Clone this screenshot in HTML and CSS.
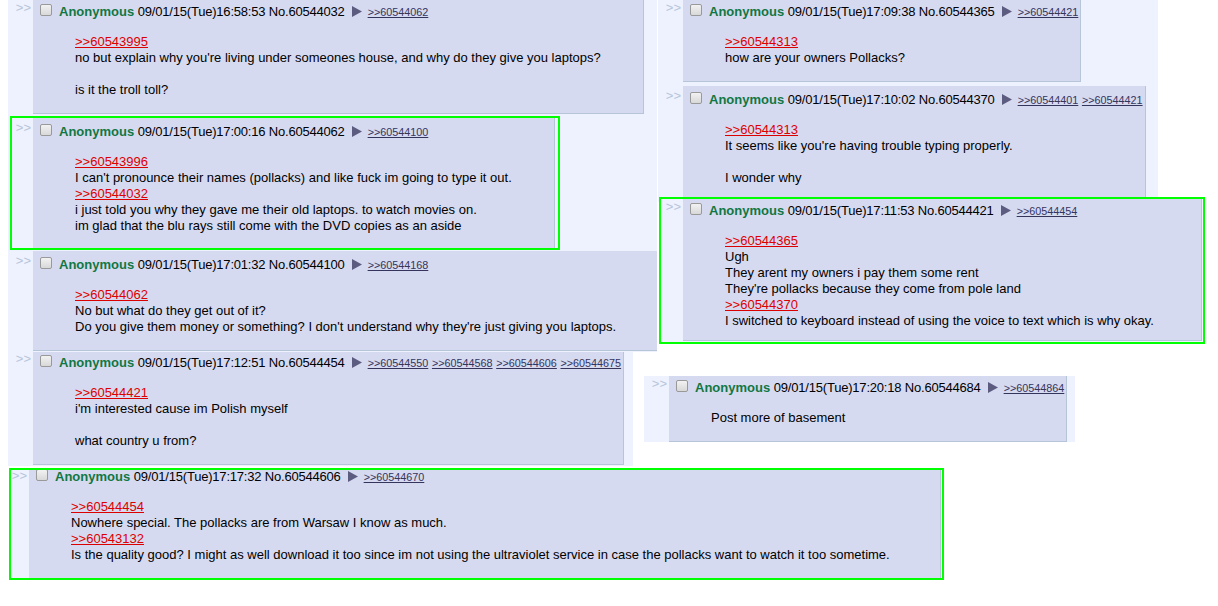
FILE: index.html
```html
<!DOCTYPE html>
<html lang="en">

<head>
    <meta charset="UTF-8">
    <meta name="viewport" content="width=device-width, initial-scale=1.0">
    <title>Thread clippings</title>
    <link rel="stylesheet" href="styles.css">
</head>

<body>
    <div class="board">

        <!-- left column -->
        <div class="clip clip-a">
            <div class="reply">
                <div class="side">&gt;&gt;</div>
                <div class="post">
                    <div class="info"><span class="chk"></span><span class="name">Anonymous</span> <span class="date">09/01/15(Tue)16:58:53 No.60544032</span><svg class="arr" viewBox="0 0 10 11"><polygon points="0,0 10,5.5 0,11" /></svg><a class="bl">&gt;&gt;60544062</a></div>
                    <blockquote class="msg"><a class="ql">&gt;&gt;60543995</a><br>no but explain why you're living under someones house, and why do they give you laptops?<br><br>is it the troll toll?</blockquote>
                </div>
            </div>
        </div>

        <div class="clip clip-b marked">
            <div class="reply">
                <div class="side">&gt;&gt;</div>
                <div class="post">
                    <div class="info"><span class="chk"></span><span class="name">Anonymous</span> <span class="date">09/01/15(Tue)17:00:16 No.60544062</span><svg class="arr" viewBox="0 0 10 11"><polygon points="0,0 10,5.5 0,11" /></svg><a class="bl">&gt;&gt;60544100</a></div>
                    <blockquote class="msg"><a class="ql">&gt;&gt;60543996</a><br>I can't pronounce their names (pollacks) and like fuck im going to type it out.<br><a class="ql">&gt;&gt;60544032</a><br>i just told you why they gave me their old laptops. to watch movies on.<br>im glad that the blu rays still come with the DVD copies as an aside</blockquote>
                </div>
            </div>
        </div>

        <div class="clip clip-c">
            <div class="reply">
                <div class="side">&gt;&gt;</div>
                <div class="post">
                    <div class="info"><span class="chk"></span><span class="name">Anonymous</span> <span class="date">09/01/15(Tue)17:01:32 No.60544100</span><svg class="arr" viewBox="0 0 10 11"><polygon points="0,0 10,5.5 0,11" /></svg><a class="bl">&gt;&gt;60544168</a></div>
                    <blockquote class="msg"><a class="ql">&gt;&gt;60544062</a><br>No but what do they get out of it?<br>Do you give them money or something? I don't understand why they're just giving you laptops.</blockquote>
                </div>
            </div>
        </div>

        <div class="clip clip-d">
            <div class="reply">
                <div class="side">&gt;&gt;</div>
                <div class="post">
                    <div class="info"><span class="chk"></span><span class="name">Anonymous</span> <span class="date">09/01/15(Tue)17:12:51 No.60544454</span><svg class="arr" viewBox="0 0 10 11"><polygon points="0,0 10,5.5 0,11" /></svg><a class="bl">&gt;&gt;60544550</a> <a class="bl">&gt;&gt;60544568</a> <a class="bl">&gt;&gt;60544606</a> <a class="bl">&gt;&gt;60544675</a></div>
                    <blockquote class="msg"><a class="ql">&gt;&gt;60544421</a><br>i'm interested cause im Polish myself<br><br>what country u from?</blockquote>
                </div>
            </div>
        </div>

        <div class="clip clip-e marked">
            <div class="reply">
                <div class="side">&gt;&gt;</div>
                <div class="post">
                    <div class="info"><span class="chk"></span><span class="name">Anonymous</span> <span class="date">09/01/15(Tue)17:17:32 No.60544606</span><svg class="arr" viewBox="0 0 10 11"><polygon points="0,0 10,5.5 0,11" /></svg><a class="bl">&gt;&gt;60544670</a></div>
                    <blockquote class="msg"><a class="ql">&gt;&gt;60544454</a><br>Nowhere special. The pollacks are from Warsaw I know as much.<br><a class="ql">&gt;&gt;60543132</a><br>Is the quality good? I might as well download it too since im not using the ultraviolet service in case the pollacks want to watch it too sometime.</blockquote>
                </div>
            </div>
        </div>

        <!-- right column -->
        <div class="clip clip-f">
            <div class="reply">
                <div class="side">&gt;&gt;</div>
                <div class="post">
                    <div class="info"><span class="chk"></span><span class="name">Anonymous</span> <span class="date">09/01/15(Tue)17:09:38 No.60544365</span><svg class="arr" viewBox="0 0 10 11"><polygon points="0,0 10,5.5 0,11" /></svg><a class="bl">&gt;&gt;60544421</a></div>
                    <blockquote class="msg"><a class="ql">&gt;&gt;60544313</a><br>how are your owners Pollacks?</blockquote>
                </div>
            </div>
            <div class="reply">
                <div class="side">&gt;&gt;</div>
                <div class="post">
                    <div class="info"><span class="chk"></span><span class="name">Anonymous</span> <span class="date">09/01/15(Tue)17:10:02 No.60544370</span><svg class="arr" viewBox="0 0 10 11"><polygon points="0,0 10,5.5 0,11" /></svg><a class="bl">&gt;&gt;60544401</a> <a class="bl">&gt;&gt;60544421</a></div>
                    <blockquote class="msg"><a class="ql">&gt;&gt;60544313</a><br>It seems like you're having trouble typing properly.<br><br>I wonder why</blockquote>
                </div>
            </div>
        </div>

        <div class="clip clip-g marked">
            <div class="reply">
                <div class="side">&gt;&gt;</div>
                <div class="post">
                    <div class="info"><span class="chk"></span><span class="name">Anonymous</span> <span class="date">09/01/15(Tue)17:11:53 No.60544421</span><svg class="arr" viewBox="0 0 10 11"><polygon points="0,0 10,5.5 0,11" /></svg><a class="bl">&gt;&gt;60544454</a></div>
                    <blockquote class="msg"><a class="ql">&gt;&gt;60544365</a><br>Ugh<br>They arent my owners i pay them some rent<br>They're pollacks because they come from pole land<br><a class="ql">&gt;&gt;60544370</a><br>I switched to keyboard instead of using the voice to text which is why okay.</blockquote>
                </div>
            </div>
        </div>

        <div class="clip clip-h">
            <div class="reply">
                <div class="side">&gt;&gt;</div>
                <div class="post">
                    <div class="info"><span class="chk"></span><span class="name">Anonymous</span> <span class="date">09/01/15(Tue)17:20:18 No.60544684</span><svg class="arr" viewBox="0 0 10 11"><polygon points="0,0 10,5.5 0,11" /></svg><a class="bl">&gt;&gt;60544864</a></div>
                    <blockquote class="msg">Post more of basement</blockquote>
                </div>
            </div>
        </div>

    </div>
</body>

</html>
```

FILE: styles.css
```css
body {
    margin: 0;
    background: #fff;
    font-family: 'Liberation Sans', Arial, sans-serif;
    font-size: 13px;
    color: #000;
}

.board {
    position: relative;
    width: 1218px;
    height: 606px;
    overflow: hidden;
}

/* each clipping is a cropped screenshot pasted on the canvas */
.clip {
    position: absolute;
    overflow: hidden;
    box-sizing: border-box;
    background: #eef2ff;
}

.clip.marked {
    border: 2px solid #0f0;
}

.reply {
    display: flex;
    align-items: flex-start;
}

.reply + .reply {
    margin-top: 4px;
}

.side {
    flex: none;
    width: 23px;
    padding: 2px 2px 0 0;
    text-align: right;
    color: #b7c5d9;
    line-height: 16px;
}

.post {
    flex: none;
    padding: 2px;
    background: #d6daf0;
    border-right: 1px solid #b7c5d9;
    border-bottom: 1px solid #b7c5d9;
    white-space: nowrap;
}

.info {
    height: 16px;
    padding-top: 4px;
    line-height: 16px;
}

.chk {
    display: inline-block;
    width: 10px;
    height: 10px;
    margin: 0 7px 0 5px;
    border: 1px solid #999;
    border-radius: 2px;
    background: linear-gradient(#f2f2f2, #d8d8d8);
}

.name {
    color: #117743;
    font-weight: bold;
}

.date {
    letter-spacing: -0.2px;
}

.arr {
    width: 10px;
    height: 11px;
    margin: 0 6px 0 7px;
    vertical-align: -1px;
    fill: #5c5c80;
}

.bl {
    font-size: 10.8px;
    color: #34345c;
    text-decoration: underline;
}

.msg {
    margin: 14px 40px 13px 40px;
    line-height: 16px;
}

.ql {
    color: #d00;
    text-decoration: underline;
}

/* placement of the clippings */
.clip-a {
    left: 8px;
    top: 0;
    width: 649px;
    height: 251px;
}

.clip-a .reply {
    margin-top: -2px;
}

.clip-b {
    left: 10px;
    top: 116px;
    width: 550px;
    height: 134px;
}

.clip-b .reply {
    margin-left: -4px;
}

.clip-c {
    left: 8px;
    top: 251px;
    width: 649px;
    height: 101px;
}

.clip-d {
    left: 8px;
    top: 352px;
    width: 625px;
    height: 114px;
}

.clip-d .reply {
    margin-top: -3px;
}

.clip-e {
    left: 9px;
    top: 468px;
    width: 935px;
    height: 112px;
}

.clip-e .reply {
    margin: -7px 0 0 -7px;
}

.clip-e .side {
    padding-top: 5px;
}

.clip-e .post {
    min-width: 907px;
}

.clip-f {
    left: 658px;
    top: 0;
    width: 500px;
    height: 202px;
}

.clip-f .reply:first-child {
    margin-top: -2px;
}

.clip-g {
    left: 659px;
    top: 197px;
    width: 546px;
    height: 147px;
}

.clip-g .reply {
    margin: -2px 0 0 -3px;
}

.clip-g .post {
    min-width: 514px;
}

.clip-g .msg {
    margin-bottom: 9px;
}

.clip-h {
    left: 644px;
    top: 376px;
    width: 431px;
    height: 66px;
}

.clip-h .reply {
    margin-top: -2px;
}
```
